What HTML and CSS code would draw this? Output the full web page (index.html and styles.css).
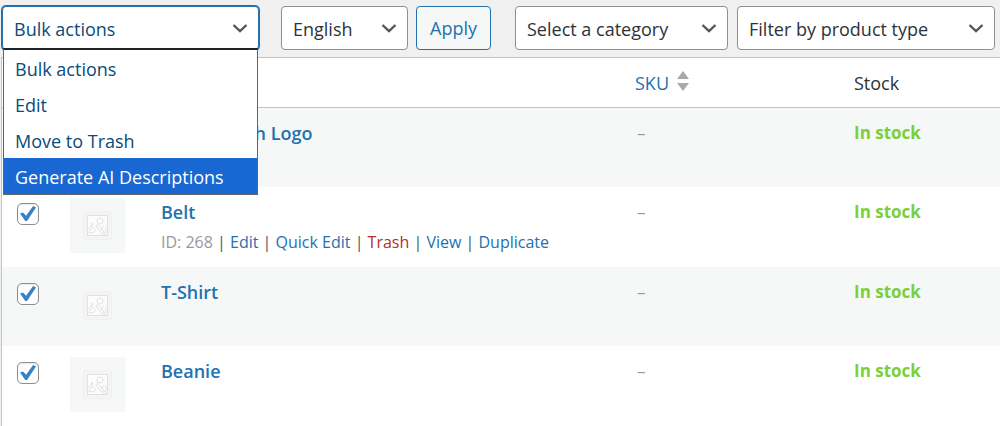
FILE: index.html
```html
<!DOCTYPE html>
<html lang="en">
<head>
    <meta charset="UTF-8">
    <title>Products</title>
    <link rel="stylesheet" href="styles.css">
</head>
<body>
    <svg class="sprite" aria-hidden="true">
        <symbol id="chevron" viewBox="0 0 16 16">
            <path d="M1.5 5 8 11.2 14.5 5" fill="none" stroke="#50575e" stroke-width="2.4"/>
        </symbol>
        <symbol id="placeholder" viewBox="0 0 55 55">
            <rect x="13.500" y="13.500" width="28" height="28" rx="1" fill="#f3f4f4" stroke="#eff0f0"/>
            <rect x="17.500" y="17.500" width="20" height="20" fill="#fcfcfc" stroke="#e0e1e1"/>
            <g fill="none" stroke="#d9dbdb" stroke-width=".8">
                <circle cx="30" cy="23" r="3"/>
                <path d="M18 31.500l4.500-6.500v4l3 3.500-2 2.500-5.500-1M22.500 29l-3 4M25.500 28l2-1.500 8.500 9.500-2 1.500zM32 32.500c-1-2 .5-4 2-3.500M33 34c2 1 4-.5 3-2.500s-1-1.500 0-3"/>
            </g>
        </symbol>
    </svg>

    <form class="toolbar">
        <div class="select bulk">
            <select aria-label="Bulk actions">
                <option>Bulk actions</option>
            </select>
            <svg class="chevron"><use href="#chevron"/></svg>
            <ul class="menu" role="listbox" aria-label="Bulk actions">
                <li role="option">Bulk actions</li>
                <li role="option">Edit</li>
                <li role="option">Move to Trash</li>
                <li role="option" class="active" aria-selected="true">Generate AI Descriptions</li>
            </ul>
        </div>
        <div class="select language">
            <select aria-label="Language">
                <option>English</option>
            </select>
            <svg class="chevron"><use href="#chevron"/></svg>
        </div>
        <button type="button" class="apply-btn">Apply</button>
        <div class="select category">
            <select aria-label="Category">
                <option>Select a category</option>
            </select>
            <svg class="chevron"><use href="#chevron"/></svg>
        </div>
        <div class="select type">
            <select aria-label="Product type">
                <option>Filter by product type</option>
            </select>
            <svg class="chevron"><use href="#chevron"/></svg>
        </div>
    </form>

    <table class="products">
        <thead>
            <tr>
                <th class="check"></th>
                <th class="thumb"></th>
                <th class="name"></th>
                <th class="sku">
                    <a href="#">SKU
                        <svg class="sort" viewBox="0 0 12 22"><path d="M6 1l6 8H0zM6 21l6-8H0z" fill="#a7aaad"/></svg>
                    </a>
                </th>
                <th class="stock">Stock</th>
            </tr>
        </thead>
        <tbody>
            <tr>
                <td><input type="checkbox" aria-label="Select Hoodie with Logo" checked></td>
                <td><svg class="thumbnail"><use href="#placeholder"/></svg></td>
                <td><a href="#" class="title">Hoodie with Logo</a></td>
                <td class="empty">–</td>
                <td class="in-stock">In stock</td>
            </tr>
            <tr>
                <td><input type="checkbox" aria-label="Select Belt" checked></td>
                <td><svg class="thumbnail"><use href="#placeholder"/></svg></td>
                <td>
                    <a href="#" class="title">Belt</a>
                    <div class="row-actions">
                        <span class="id">ID: 268</span> | <a href="#">Edit</a> | <a href="#">Quick Edit</a> | <a href="#" class="trash">Trash</a> | <a href="#">View</a> | <a href="#">Duplicate</a>
                    </div>
                </td>
                <td class="empty">–</td>
                <td class="in-stock">In stock</td>
            </tr>
            <tr>
                <td><input type="checkbox" aria-label="Select T-Shirt" checked></td>
                <td><svg class="thumbnail"><use href="#placeholder"/></svg></td>
                <td><a href="#" class="title">T-Shirt</a></td>
                <td class="empty">–</td>
                <td class="in-stock">In stock</td>
            </tr>
            <tr>
                <td><input type="checkbox" aria-label="Select Beanie" checked></td>
                <td><svg class="thumbnail"><use href="#placeholder"/></svg></td>
                <td><a href="#" class="title">Beanie</a></td>
                <td class="empty">–</td>
                <td class="in-stock">In stock</td>
            </tr>
        </tbody>
    </table>
</body>
</html>
```
FILE: styles.css
```css
* {
    box-sizing: border-box;
}
body {
    margin: 0;
    background-color: #f0f0f1;
    color: #2c3338;
    font-family: "Open Sans", "Noto Sans", sans-serif;
    font-size: 18px;
    line-height: 24px;
}
a {
    color: #2271b1;
    text-decoration: none;
}
.sprite {
    display: none;
}
.toolbar {
    display: flex;
    gap: 8px;
    padding: 6px 5px 7px 2px;
}
.select {
    display: grid;
    align-items: center;
    position: relative;
}
.select select,
.select .chevron {
    grid-area: 1 / 1;
}
.select select {
    appearance: none;
    width: 100%;
    height: 44px;
    padding: 2px 36px 0 11px;
    border: 1px solid #8c8f94;
    border-radius: 4px;
    background-color: #fff;
    color: #2c3338;
    font: inherit;
}
.chevron {
    justify-self: end;
    width: 16px;
    height: 16px;
    margin-right: 11px;
    pointer-events: none;
}
.bulk {
    width: 257px;
    margin-right: 14px;
}
.bulk select {
    border-color: #2271b1;
    box-shadow: 0 0 0 1px #2271b1;
    color: #0a4b78;
}
.language {
    width: 127px;
}
.category {
    width: 213px;
    margin-left: 16px;
}
.type {
    width: 258px;
    margin-left: 1px;
}
.menu {
    position: absolute;
    top: 42px;
    left: 1px;
    right: 1px;
    z-index: 1;
    margin: 0;
    padding: 0;
    border: 1px solid #646464;
    border-top: 2px solid #1d2327;
    background-color: #fff;
    color: #0a4b78;
    list-style: none;
}
.menu li {
    padding: 7px 11px 5px;
}
.menu .active {
    background-color: #1967d2;
    color: #fff;
}
.apply-btn {
    width: 75px;
    height: 44px;
    padding: 0;
    border: 1px solid #2271b1;
    border-radius: 4px;
    background-color: #f6f7f7;
    color: #2271b1;
    font: inherit;
}
.products {
    width: calc(100% - 1px);
    margin-left: 1px;
    border: 1px solid #c3c4c7;
    border-right: none;
    border-bottom: none;
    border-spacing: 0;
    table-layout: fixed;
    background-color: #fff;
}
.products th {
    height: 50px;
    padding: 0;
    border-bottom: 1px solid #c3c4c7;
    font-weight: 400;
    text-align: left;
}
.products td {
    padding: 11px 0 13px;
    vertical-align: top;
}
.products tbody tr:nth-child(odd) {
    background-color: #f6f7f7;
}
.products tbody tr:nth-child(even) td {
    padding-bottom: 14px;
}
.products .check {
    width: 68px;
}
.products .thumb {
    width: 91px;
}
.products .sku {
    width: 219px;
}
.products .stock {
    width: 146px;
}
.sku a {
    display: flex;
    align-items: center;
    gap: 8px;
}
.sort {
    width: 12px;
    height: 22px;
    margin-bottom: 4px;
}
.thumbnail {
    display: block;
    width: 55px;
    height: 55px;
    background-color: #f6f7f7;
}
input[type="checkbox"] {
    appearance: none;
    display: block;
    width: 22px;
    height: 22px;
    margin: 5px 0 0 15px;
    border: 1px solid #8c8f94;
    border-radius: 5px;
    background-color: #fff;
    box-shadow: inset 0 1px 2px rgba(0, 0, 0, 0.1);
}
input[type="checkbox"]:checked::before {
    content: "";
    display: block;
    width: 16px;
    height: 15px;
    margin: 2px;
    background-color: #3582c4;
    clip-path: polygon(0 50%, 19% 43%, 38% 65%, 82% 0, 100% 10%, 44% 100%, 33% 100%);
}
.title {
    display: block;
    margin-top: 2px;
    font-weight: 600;
}
.row-actions {
    margin-top: 6px;
    margin-bottom: -13px;
    color: #50575e;
    font-size: 16px;
}
.row-actions .id {
    color: #999;
}
.row-actions .trash {
    color: #b32d2e;
}
.products .empty,
.products .in-stock {
    padding-top: 13px;
    font-size: 17px;
}
.products .empty {
    padding-left: 2px;
    color: #999;
}
.products .in-stock {
    color: #7ad03a;
    font-weight: 700;
}
```
